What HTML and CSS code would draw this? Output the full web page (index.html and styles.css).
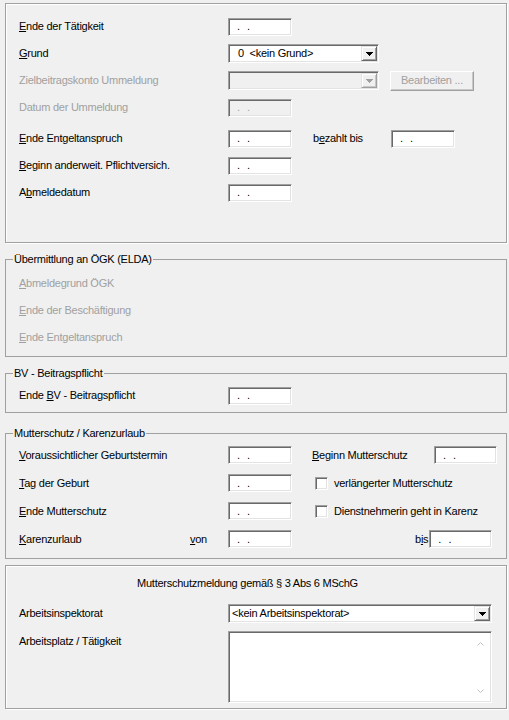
FILE: index.html
```html
<!DOCTYPE html>
<html lang="de">
<head>
<meta charset="utf-8">
<title>Austritt</title>
<link rel="stylesheet" href="styles.css">
</head>
<body>
<main class="form">
  <section class="panel panel-top">
    <div class="row">
      <span class="lbl"><u>E</u>nde der Tätigkeit</span>
      <span class="date sunken"><span class="dots">. .</span></span>
    </div>
    <div class="row">
      <span class="lbl"><u>G</u>rund</span>
      <span class="combo sunken w-grund"><span class="combo-text">0&nbsp; &lt;kein Grund&gt;</span><span class="drop"><svg width="7" height="4" viewBox="0 0 7 4"><rect x="0" y="0" width="7" height="1"/><rect x="1" y="1" width="5" height="1"/><rect x="2" y="2" width="3" height="1"/><rect x="3" y="3" width="1" height="1"/></svg></span></span>
    </div>
    <div class="row">
      <span class="lbl disabled">Zielbeitragskonto Ummeldung</span>
      <span class="combo sunken w-grund is-disabled"><span class="combo-text"></span><span class="drop"><svg width="7" height="4" viewBox="0 0 7 4"><rect x="0" y="0" width="7" height="1"/><rect x="1" y="1" width="5" height="1"/><rect x="2" y="2" width="3" height="1"/><rect x="3" y="3" width="1" height="1"/></svg></span></span>
      <span class="button is-disabled">Bearbeiten ...</span>
    </div>
    <div class="row">
      <span class="lbl disabled">Datum der Ummeldung</span>
      <span class="date sunken is-disabled"><span class="dots">. .</span></span>
    </div>
    <div class="row gap-4">
      <span class="lbl"><u>E</u>nde Entgeltanspruch</span>
      <span class="date sunken"><span class="dots">. .</span></span>
      <span class="lbl-paid">b<u>e</u>zahlt bis</span>
      <span class="date sunken"><span class="dots">. .</span></span>
    </div>
    <div class="row">
      <span class="lbl"><u>B</u>eginn anderweit. Pflichtversich.</span>
      <span class="date sunken"><span class="dots">. .</span></span>
    </div>
    <div class="row">
      <span class="lbl">A<u>b</u>meldedatum</span>
      <span class="date sunken"><span class="dots">. .</span></span>
    </div>
  </section>

  <fieldset class="group group-elda">
    <legend>Übermittlung an ÖGK (ELDA)</legend>
    <div class="row"><span class="lbl disabled"><u>A</u>bmeldegrund ÖGK</span></div>
    <div class="row"><span class="lbl disabled"><u>E</u>nde der Beschäftigung</span></div>
    <div class="row"><span class="lbl disabled"><u>E</u>nde Entgeltanspruch</span></div>
  </fieldset>

  <fieldset class="group group-bv">
    <legend>BV - Beitragspflicht</legend>
    <div class="row">
      <span class="lbl">Ende <u>B</u>V - Beitragspflicht</span>
      <span class="date sunken"><span class="dots">. .</span></span>
    </div>
  </fieldset>

  <fieldset class="group group-mutter">
    <legend>Mutterschutz / Karenzurlaub</legend>
    <div class="row tall">
      <span class="lbl"><u>V</u>oraussichtlicher Geburtstermin</span>
      <span class="date sunken"><span class="dots">. .</span></span>
      <span class="lbl-begin"><u>B</u>eginn Mutterschutz</span>
      <span class="date sunken w-right"><span class="dots">. .</span></span>
    </div>
    <div class="row tall">
      <span class="lbl"><u>T</u>ag der Geburt</span>
      <span class="date sunken"><span class="dots">. .</span></span>
      <span class="check sunken"></span>
      <span class="check-lbl">verlängerter Mutterschutz</span>
    </div>
    <div class="row tall">
      <span class="lbl"><u>E</u>nde Mutterschutz</span>
      <span class="date sunken"><span class="dots">. .</span></span>
      <span class="check sunken"></span>
      <span class="check-lbl">Dienstnehmerin geht in Karenz</span>
    </div>
    <div class="row tall">
      <span class="lbl lbl-split"><span class="lbl-main"><u>K</u>arenzurlaub</span><span><u>v</u>on</span></span>
      <span class="date sunken"><span class="dots">. .</span></span>
      <span class="lbl-bis">b<u>i</u>s</span>
      <span class="date sunken w-right"><span class="dots">. .</span></span>
    </div>
  </fieldset>

  <section class="panel panel-bottom">
    <div class="title">Mutterschutzmeldung gemäß § 3 Abs 6 MSchG</div>
    <div class="inspect-row">
      <span class="lbl">Arbeitsinspektorat</span>
      <span class="combo sunken w-wide"><span class="combo-text tight">&lt;kein Arbeitsinspektorat&gt;</span><span class="drop"><svg width="7" height="4" viewBox="0 0 7 4"><rect x="0" y="0" width="7" height="1"/><rect x="1" y="1" width="5" height="1"/><rect x="2" y="2" width="3" height="1"/><rect x="3" y="3" width="1" height="1"/></svg></span></span>
    </div>
    <div class="memo-row">
      <span class="lbl memo-lbl">Arbeitsplatz / Tätigkeit</span>
      <div class="memo sunken">
        <div class="memo-area"></div>
        <div class="vscroll">
          <svg width="7" height="4" viewBox="0 0 7 4"><polyline points="0.5,3.5 3.5,0.5 6.5,3.5"/></svg>
          <svg width="7" height="4" viewBox="0 0 7 4"><polyline points="0.5,0.5 3.5,3.5 6.5,0.5"/></svg>
        </div>
      </div>
    </div>
  </section>
</main>
</body>
</html>
```

FILE: styles.css
```css
html, body {
  margin: 0;
  padding: 0;
  background: #f0f0f0;
}

body {
  width: 509px;
  height: 720px;
  overflow: hidden;
  font: 11px/13px "Liberation Sans", Arial, sans-serif;
  letter-spacing: -0.25px;
  color: #000;
}

.form {
  display: flex;
  flex-direction: column;
  padding: 3px 0 0 5px;
}

u {
  text-decoration: underline;
  text-underline-offset: 1px;
}

.panel {
  box-sizing: border-box;
  width: 502px;
  border: 1px solid #a0a0a0;
  box-shadow: inset 1px 1px 0 #fff, 1px 1px 0 #fff;
}

.panel-top {
  height: 240px;
  padding: 9px 0 0 13px;
}

.row {
  display: flex;
  align-items: center;
  height: 27px;
}

.row.tall {
  height: 28px;
}

.gap-4 {
  margin-top: 4px;
}

.lbl {
  flex: none;
  width: 209px;
  white-space: nowrap;
}

.disabled {
  color: #a0a0a0;
}

.sunken {
  box-sizing: border-box;
  border: 1px solid;
  border-color: #a0a0a0 #fff #fff #a0a0a0;
  box-shadow: inset 1px 1px 0 #696969, inset -1px -1px 0 #e3e3e3;
  background: #fff;
}

.date {
  flex: none;
  display: flex;
  align-items: center;
  width: 64px;
  height: 18px;
  padding-left: 8px;
}

.date.w-right {
  width: 63px;
}

.dots {
  letter-spacing: 0;
  word-spacing: 4px;
  white-space: pre;
}

.is-disabled {
  background: #f0f0f0;
  color: #a0a0a0;
}

.combo {
  flex: none;
  display: flex;
  height: 19px;
  padding: 1px;
}

.w-grund {
  width: 151px;
}

.w-wide {
  width: 264px;
}

.combo-text {
  flex: 1;
  padding-left: 8px;
  line-height: 15px;
  white-space: nowrap;
}

.combo-text.tight {
  padding-left: 2px;
}

.drop {
  box-sizing: border-box;
  flex: none;
  display: flex;
  align-items: center;
  justify-content: center;
  width: 16px;
  height: 15px;
  background: #f0f0f0;
  border: 1px solid;
  border-color: #e3e3e3 #696969 #696969 #e3e3e3;
  box-shadow: inset 1px 1px 0 #fff, inset -1px -1px 0 #a0a0a0;
}

.drop svg {
  fill: #000;
}

.is-disabled .drop svg {
  fill: #a0a0a0;
}

.is-disabled .drop {
  border-color: #e3e3e3 #a0a0a0 #a0a0a0 #e3e3e3;
  box-shadow: inset 1px 1px 0 #fff, inset -1px -1px 0 #c8c8c8;
}

.button {
  box-sizing: border-box;
  flex: none;
  display: flex;
  align-items: center;
  justify-content: center;
  width: 84px;
  height: 20px;
  margin-left: 11px;
  border: 1px solid;
  border-color: #fff #a0a0a0 #a0a0a0 #fff;
  box-shadow: inset -1px -1px 0 #c8c8c8;
}

.lbl-paid {
  flex: none;
  width: 78px;
  margin-left: 21px;
  white-space: nowrap;
}

/* group boxes */
.group {
  box-sizing: border-box;
  width: 502px;
  min-width: 0;
  margin: 10px 0 0;
  border: 1px solid #a0a0a0;
  padding: 4px 0 5px 13px;
}

.group legend {
  margin-left: -6px;
  padding: 0 1px;
  line-height: 13px;
}

.group-bv {
  padding: 2px 0 3px 13px;
}

.group-mutter {
  margin-top: 14px;
  padding: 1px 0 5px 13px;
}

.lbl-begin {
  flex: none;
  width: 122px;
  margin-left: 20px;
  white-space: nowrap;
}

.check {
  flex: none;
  width: 13px;
  height: 13px;
  margin-left: 23px;
  margin-right: 6px;
}

.check-lbl {
  white-space: nowrap;
}

.lbl-split {
  display: flex;
}

.lbl-main {
  width: 171px;
}

.lbl-bis {
  flex: none;
  margin-left: 123px;
  margin-right: 1px;
  white-space: nowrap;
}

/* bottom panel */
.panel-bottom {
  height: 144px;
  margin-top: 6px;
  padding: 11px 0 0 13px;
}

.title {
  text-align: center;
  padding-right: 30px;
  white-space: nowrap;
}

.inspect-row {
  display: flex;
  align-items: center;
  height: 19px;
  margin-top: 14px;
}

.memo-row {
  display: flex;
  align-items: flex-start;
  margin-top: 8px;
}

.memo-lbl {
  padding-top: 4px;
}

.memo {
  flex: none;
  display: flex;
  width: 264px;
  height: 72px;
  padding: 2px;
}

.memo-area {
  flex: 1;
}

.vscroll {
  flex: none;
  display: flex;
  flex-direction: column;
  align-items: center;
  justify-content: space-between;
  width: 17px;
  padding: 8px 0 7px;
  box-sizing: border-box;
}

.vscroll svg {
  fill: none;
  stroke: #c0c0c0;
  stroke-width: 1;
}
```
